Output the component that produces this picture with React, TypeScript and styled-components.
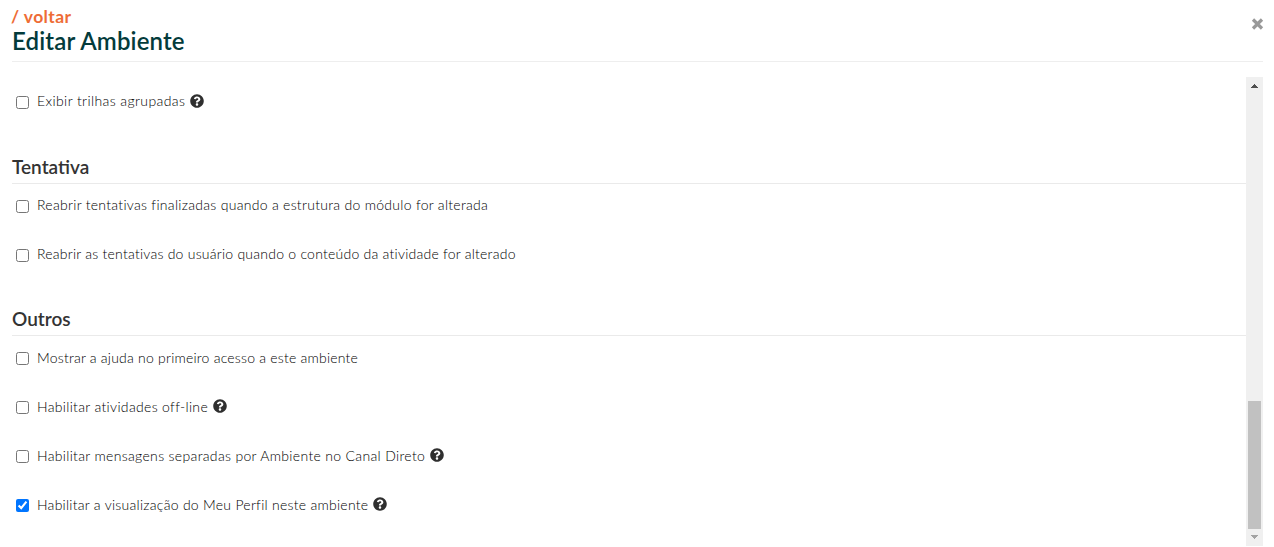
import { useState } from 'react';
import styled, { createGlobalStyle } from 'styled-components';
import { FaQuestionCircle } from 'react-icons/fa';

type OptionProps = {
  label: string;
  help?: boolean;
  spacing?: number;
  initial?: boolean;
};

const GlobalStyle = createGlobalStyle`
  * {
    box-sizing: border-box;
  }
  body {
    margin: 0;
    background: #fff;
    color: #000;
    font-family: Lato, sans-serif;
    font-size: 14px;
    overflow: hidden;
  }
`;

const Page = styled.div`
  display: flex;
  flex-direction: column;
  height: 547px;
  padding: 0 11px 1px 12px;
`;

const Header = styled.header`
  display: flex;
  justify-content: space-between;
  height: 62px;
  border-bottom: 1px solid #eee;
`;

const Back = styled.a`
  display: block;
  margin: 7px 0 0 -1px;
  color: #ee6c35;
  font-size: 17.5px;
  font-weight: 700;
  line-height: 20px;
  letter-spacing: 0.4px;
  text-decoration: none;
`;

const Title = styled.h1`
  margin: 1px 0 0;
  color: #033b3b;
  font-size: 24px;
  font-weight: 600;
  line-height: 26px;
  letter-spacing: 0.15px;
`;

const Close = styled.button`
  align-self: flex-start;
  display: flex;
  margin: 18px -1px 0 0;
  padding: 0;
  border: none;
  background: none;
  cursor: pointer;
`;

const Body = styled.div`
  display: flex;
  flex: 1;
  min-height: 0;
  margin-top: 15px;
`;

const Content = styled.main`
  flex: 1;
  padding-top: 15px;
`;

const Options = styled.div<{ $line?: number }>`
  display: flex;
  flex-direction: column;
  gap: 29px;
  line-height: ${({ $line = 20 }) => $line}px;
`;

const Section = styled.section<{ $top: number }>`
  margin-top: ${({ $top }) => $top}px;
`;

const SectionTitle = styled.h2`
  height: 30px;
  margin: 0 0 12px;
  border-bottom: 1px solid #eaeaea;
  color: #333;
  font-size: 19px;
  font-weight: 600;
  line-height: 26px;
`;

const Row = styled.label`
  display: flex;
  align-items: flex-start;
  height: 20px;
`;

const Check = styled.input`
  width: 13px;
  height: 13px;
  margin: 4px 8px 0 4px;
`;

const Text = styled.span<{ $spacing: number }>`
  font-weight: 300;
  letter-spacing: ${({ $spacing }) => $spacing}px;
  white-space: nowrap;
`;

const Help = styled(FaQuestionCircle)`
  margin: 2px 0 0 5px;
  color: #2f2f2f;
`;

const Scrollbar = styled.div`
  display: flex;
  flex-direction: column;
  align-items: center;
  justify-content: space-between;
  width: 17px;
  padding: 7px 0;
  background: #f0f0f0;
`;

const Thumb = styled.div`
  width: 13px;
  height: 128px;
  margin: auto 0 6px;
  background: #c1c1c1;
`;

function Option({ label, help, spacing = 0.3, initial = false }: OptionProps) {
  const [checked, setChecked] = useState(initial);

  return (
    <Row>
      <Check
        type="checkbox"
        checked={checked}
        onChange={() => setChecked(!checked)}
      />
      <Text $spacing={spacing}>{label}</Text>
      {help && <Help size={14} />}
    </Row>
  );
}

export default function App() {
  return (
    <>
      <GlobalStyle />
      <Page>
        <Header>
          <div>
            <Back href="#">/ voltar</Back>
            <Title>Editar Ambiente</Title>
          </div>
          <Close aria-label="Fechar">
            <svg width="13" height="12" viewBox="0 0 13 12">
              <path d="M2 1.5L11 10.5M11 1.5L2 10.5" stroke="#999" strokeWidth="3.2" />
            </svg>
          </Close>
        </Header>
        <Body>
          <Content>
            <Options $line={18}>
              <Option label="Exibir trilhas agrupadas" spacing={0.4} help />
            </Options>

            <Section $top={42}>
              <SectionTitle>Tentativa</SectionTitle>
              <Options $line={18}>
                <Option
                  label="Reabrir tentativas finalizadas quando a estrutura do módulo for alterada"
                  spacing={0.29}
                />
                <Option
                  label="Reabrir as tentativas do usuário quando o conteúdo da atividade for alterado"
                  spacing={0.24}
                />
              </Options>
            </Section>

            <Section $top={41}>
              <SectionTitle>Outros</SectionTitle>
              <Options>
                <Option
                  label="Mostrar a ajuda no primeiro acesso a este ambiente"
                  spacing={0.22}
                />
                <Option label="Habilitar atividades off-line" spacing={0.33} help />
                <Option
                  label="Habilitar mensagens separadas por Ambiente no Canal Direto"
                  spacing={0.33}
                  help
                />
                <Option
                  label="Habilitar a visualização do Meu Perfil neste ambiente"
                  spacing={0.27}
                  help
                  initial
                />
              </Options>
            </Section>
          </Content>
          <Scrollbar>
            <svg width="7" height="4" viewBox="0 0 7 4" shapeRendering="crispEdges">
              <path d="M3 0h1v1h1v1h1v1h1v1H0V3h1V2h1V1h1z" fill="#505050" />
            </svg>
            <Thumb />
            <svg width="7" height="4" viewBox="0 0 7 4" shapeRendering="crispEdges">
              <path d="M0 0h7v1H6v1H5v1H4v1H3V3H2V2H1V1H0z" fill="#a3a3a3" />
            </svg>
          </Scrollbar>
        </Body>
      </Page>
    </>
  );
}
